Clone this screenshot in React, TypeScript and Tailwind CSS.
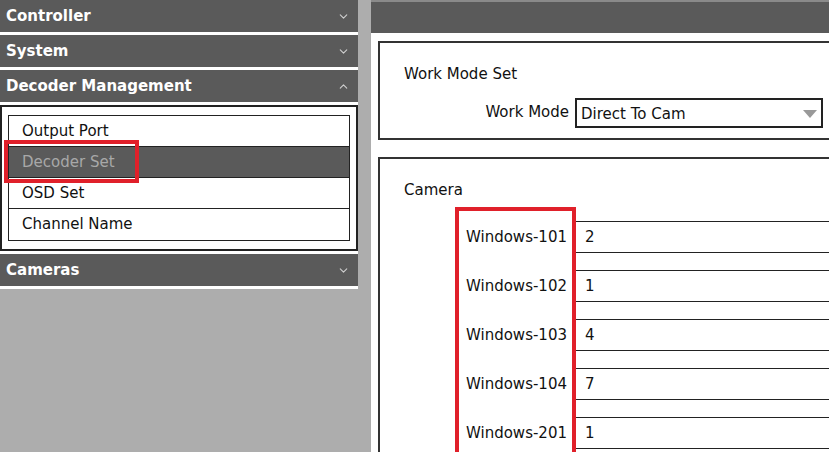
import { ChevronDown, ChevronUp } from 'lucide-react'

const ROWS = [
  ['Windows-101', '2'],
  ['Windows-102', '1'],
  ['Windows-103', '4'],
  ['Windows-104', '7'],
  ['Windows-201', '1'],
]

function Header({ title, open }: { title: string; open?: boolean }) {
  return (
    <div className="h-[32px] shrink-0 bg-[#5a5a5a] flex items-center justify-between pl-[6px] pr-[8px] text-white font-bold text-[15px]">
      <span>{title}</span>
      {open ? <ChevronUp size={13} className="text-[#cfcfcf]" /> : <ChevronDown size={13} className="text-[#cfcfcf]" />}
    </div>
  )
}

export default function App() {
  return (
    <div className="w-[829px] h-[452px] overflow-hidden flex bg-[#adadad] text-[15px] text-[#111]" style={{ fontFamily: '"DejaVu Sans", Tahoma, sans-serif' }}>
      <div className="w-[358px] shrink-0 self-start bg-white flex flex-col gap-[3px] pb-[3px]">
        <Header title="Controller" />
        <Header title="System" />
        <Header title="Decoder Management" open />
        <div className="border-2 border-[#222] p-[8px] pl-[6px] pr-[6px]">
          <div className="border border-[#222] relative">
            <div className="h-[31px] flex items-center px-[13px] border-b border-[#222]">Output Port</div>
            <div className="h-[31px] flex items-center px-[13px] border-b border-[#222] bg-[#5a5a5a] text-[#a8a8a8]">Decoder Set</div>
            <div className="h-[31px] flex items-center px-[13px] border-b border-[#222]">OSD Set</div>
            <div className="h-[31px] flex items-center px-[13px]">Channel Name</div>
            <div className="absolute left-[-5px] top-[24px] w-[135px] h-[43px] border-[4px] border-[#e0202a]" />
          </div>
        </div>
        <Header title="Cameras" />
      </div>
      <div className="w-[13px] shrink-0" />
      <div className="flex-1 min-w-0 bg-white flex flex-col overflow-hidden">
        <div className="h-[33px] shrink-0 bg-[#5a5a5a] border-t-2 border-[#8a8a8a]" />
        <div className="pl-[7px] pt-[8px] flex flex-col gap-[17px] shrink-0">
          <div className="border-2 border-r-0 border-[#333] h-[99px] pl-[24px] pt-[20px]">
            <div>Work Mode Set</div>
            <div className="flex items-center mt-[12px]">
              <span className="w-[171px] text-right pr-[6px]">Work Mode</span>
              <div className="w-[248px] h-[30px] border-2 border-[#222] flex items-center justify-between px-[4px] pt-[3px]">
                <span>Direct To Cam</span>
                <svg width="14" height="9" viewBox="0 0 14 9"><path d="M0 0h14L7 8z" fill="#999" /></svg>
              </div>
            </div>
          </div>
          <div className="border-2 border-r-0 border-b-0 border-[#333] h-[300px] pl-[24px] pt-[20px]">
            <div>Camera</div>
            <div className="relative mt-[7px] ml-[51px]">
              <div className="absolute left-0 top-[-2px] w-[121px] h-[260px] border-[4px] border-b-0 border-[#e0202a]" />
              {ROWS.map(([k, v]) => (
                <div key={k} className="flex items-center h-[49px]">
                  <span className="w-[120px] text-right pr-[8px] pt-[8px]">{k}</span>
                  <div className="flex-1 h-[32px] border-y border-[#222] mt-[8px] flex items-center pl-[10px]">{v}</div>
                </div>
              ))}
            </div>
          </div>
        </div>
      </div>
    </div>
  )
}
